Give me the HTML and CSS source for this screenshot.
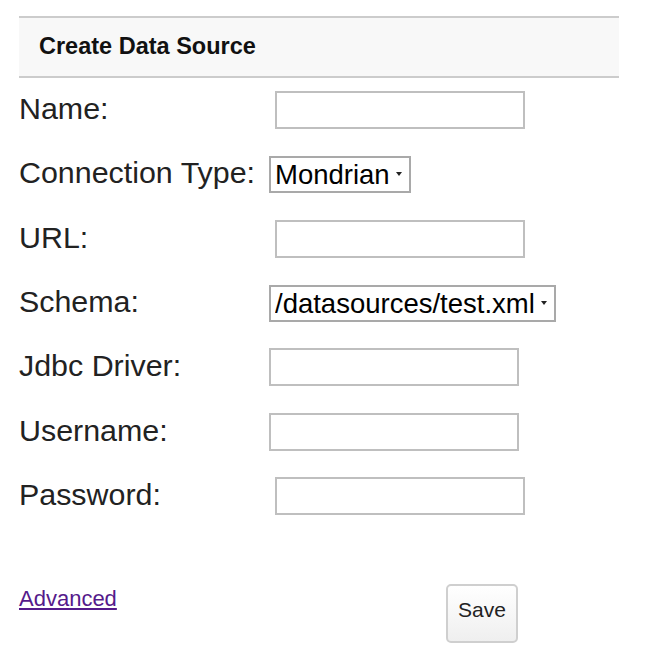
FILE: index.html
```html
<!DOCTYPE html>
<html lang="en">
<head>
    <meta charset="UTF-8">
    <title>Create Data Source</title>
    <link rel="stylesheet" href="styles.css">
</head>
<body>
<div class="panel">
    <div class="panel-header">Create Data Source</div>

    <form class="ds-form">
        <div class="row">
            <label for="dsName">Name:</label>
            <input type="text" id="dsName" class="shift">
        </div>
        <div class="row">
            <label for="dsType">Connection Type:</label>
            <select id="dsType">
                <option>Mondrian</option>
            </select>
        </div>
        <div class="row">
            <label for="dsUrl">URL:</label>
            <input type="text" id="dsUrl" class="shift">
        </div>
        <div class="row">
            <label for="dsSchema">Schema:</label>
            <select id="dsSchema">
                <option>/datasources/test.xml</option>
            </select>
        </div>
        <div class="row">
            <label for="dsDriver">Jdbc Driver:</label>
            <input type="text" id="dsDriver">
        </div>
        <div class="row">
            <label for="dsUser">Username:</label>
            <input type="text" id="dsUser">
        </div>
        <div class="row">
            <label for="dsPass">Password:</label>
            <input type="password" id="dsPass" class="shift">
        </div>

        <div class="footer">
            <a href="#" class="advanced">Advanced</a>
            <button type="button" class="save-btn">Save</button>
        </div>
    </form>
</div>
</body>
</html>
```

FILE: styles.css
```css
body {
    margin: 0;
    font-family: "Liberation Sans", Arial, sans-serif;
    color: #222;
    background: #fff;
}

.panel {
    width: 600px;
    margin: 16px 0 0 19px;
}

/* header bar */
.panel-header {
    height: 58px;
    padding: 0 20px 2px;
    box-sizing: border-box;
    display: flex;
    align-items: center;
    background-color: #f8f8f8;
    border-top: 2px solid #cccccc;
    border-bottom: 2px solid #cccccc;
    font-size: 23.5px;
    font-weight: bold;
    color: #111;
    height: 62px;
}

.row {
    display: grid;
    grid-template-columns: 250px auto;
    align-items: center;
    justify-items: start;
    height: 64.3px;
}

.row label {
    font-size: 30.4px;
    color: #222;
    margin-top: -3px;
}

input[type="text"],
input[type="password"] {
    width: 250px;
    height: 38px;
    box-sizing: border-box;
    border: 2px solid #bfbfbf;
    padding: 0 6px;
    font-size: 20px;
    outline: none;
}

input.shift {
    margin-left: 6px;
}

select {
    -webkit-appearance: none;
    appearance: none;
    height: 37px;
    box-sizing: border-box;
    border: 2px solid #a9a9a9;
    border-radius: 0;
    padding: 0 19px 0 4px;
    font-family: "Liberation Sans", Arial, sans-serif;
    font-size: 27.5px;
    color: #000;
    background: #fff url("data:image/svg+xml,%3Csvg xmlns='http://www.w3.org/2000/svg' width='6' height='4'%3E%3Cpath d='M0 0h6L3 4z' fill='%23222'/%3E%3C/svg%3E") no-repeat right 7px center;
}

/* bottom line */
.footer {
    display: flex;
    align-items: flex-start;
    width: 499px;
    margin-top: 56px;
}

.advanced {
    font-size: 22px;
    color: #551a8b;
    margin-top: 2px;
}

.save-btn {
    margin-left: auto;
    width: 72px;
    height: 59px;
    padding: 0 0 8px;
    border: 2px solid #cfcfcf;
    border-radius: 5px;
    background: linear-gradient(#ffffff, #efefef);
    font-family: "Liberation Sans", Arial, sans-serif;
    font-size: 21px;
    color: #222;
    cursor: pointer;
}
```
